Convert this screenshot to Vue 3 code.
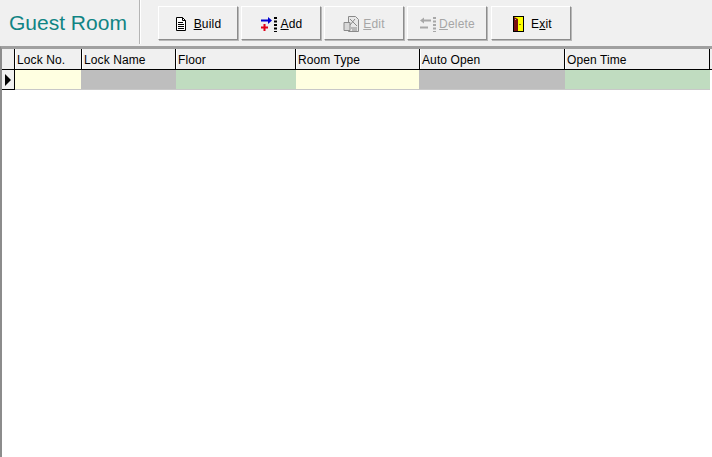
<script setup>
const buttons = [
  { key: 'build', before: '', ul: 'B', after: 'uild', disabled: false },
  { key: 'add', before: '', ul: 'A', after: 'dd', disabled: false },
  { key: 'edit', before: '', ul: 'E', after: 'dit', disabled: true },
  { key: 'delete', before: '', ul: 'D', after: 'elete', disabled: true },
  { key: 'exit', before: 'E', ul: 'x', after: 'it', disabled: false },
]

const columns = [
  { name: 'Lock No.', width: 67, cellWidth: 66, color: '#ffffe1' },
  { name: 'Lock Name', width: 94, cellWidth: 95, color: '#bebebe' },
  { name: 'Floor', width: 120, cellWidth: 120, color: '#c0dcc0' },
  { name: 'Room Type', width: 124, cellWidth: 123, color: '#ffffe1' },
  { name: 'Auto Open', width: 145, cellWidth: 146, color: '#bebebe' },
  { name: 'Open Time', width: 145, cellWidth: 145, color: '#c0dcc0' },
]
</script>

<template>
  <div class="page">
    <div class="toolbar">
      <div class="title">Guest Room</div>
      <div class="divider"></div>
      <div class="buttons">
        <button
          v-for="b in buttons"
          :key="b.key"
          class="btn"
          :class="[b.key, { off: b.disabled }]"
          type="button"
        >
          <svg v-if="b.key === 'build'" width="12" height="14" viewBox="0 0 12 14">
            <path d="M1.500 .5h6l3 3v10h-9z" fill="#fff" stroke="#000" />
            <path d="M7.500 .5v3h3M3 5.500h5M3 7.500h6M3 9.500h6M3 11.500h6" fill="none" stroke="#000" />
          </svg>
          <svg v-else-if="b.key === 'add'" width="18" height="17" viewBox="0 0 18 17">
            <path d="M1 4.500h8" stroke="#0000d0" stroke-width="2" />
            <path d="M8 1l4 3.500-4 3.500z" fill="#0000d0" />
            <path d="M1 11.500h7M4.500 8v7" stroke="#e00018" stroke-width="2" />
            <path d="M15.500 1v15" stroke="#000" stroke-width="3" stroke-dasharray="2 1.500" />
          </svg>
          <svg v-else-if="b.key === 'edit'" width="18" height="18" viewBox="0 0 18 18">
            <path d="M5.500 1.500h7l3 3v12h-10z" fill="#e8e8e8" stroke="#8a8a8a" />
            <path d="M1 7.500h6v8h-6z" fill="#d8d8d8" stroke="#8a8a8a" />
            <path d="M7 4l7 7M12 4l-5 6M8 13h6M9 15h5" stroke="#8a8a8a" fill="none" />
          </svg>
          <svg v-else-if="b.key === 'delete'" width="18" height="17" viewBox="0 0 18 17">
            <path d="M4 4.500h8M1 11.500h8" stroke="#a8a8a8" stroke-width="2" />
            <path d="M5 1.500l-4 3 4 3z" fill="#a8a8a8" />
            <path d="M15.500 1v15" stroke="#a8a8a8" stroke-width="3" stroke-dasharray="2 1.500" />
          </svg>
          <svg v-else width="11" height="16" viewBox="0 0 11 16">
            <path d="M0 0h11v16h-11z" fill="#000" />
            <path d="M1 1h9v14h-9z" fill="#ffff00" />
            <path d="M1 1l4 2v12h-4z" fill="#7a1010" />
            <path d="M2 3h1v1h-1z" fill="#9ab" />
            <path d="M6.500 8h1v1h-1z" fill="#000" />
          </svg>
          <span class="label">{{ b.before }}<u>{{ b.ul }}</u>{{ b.after }}</span>
        </button>
      </div>
    </div>

    <div class="grid">
      <div class="row head">
        <div class="indicator"></div>
        <div
          v-for="c in columns"
          :key="c.name"
          class="hcell"
          :style="{ width: c.width + 'px' }"
        >{{ c.name }}</div>
      </div>
      <div class="row data">
        <div class="indicator current"><span class="arrow"></span></div>
        <div
          v-for="c in columns"
          :key="c.name"
          class="dcell"
          :style="{ width: c.cellWidth + 'px', background: c.color }"
        ></div>
      </div>
    </div>
  </div>
</template>

<style>
html,
body {
  margin: 0;
  background: #fff;
  overflow: hidden;
}
</style>

<style scoped>
.page {
  width: 712px;
  height: 457px;
  font-family: "Liberation Sans", Arial, sans-serif;
  font-size: 12px;
  color: #000;
  display: flex;
  flex-direction: column;
  overflow: hidden;
}

.toolbar {
  height: 46px;
  flex: none;
  background: #f0f0f0;
  display: flex;
  align-items: flex-start;
}

.title {
  width: 139px;
  box-sizing: border-box;
  padding: 9px 0 0 9px;
  font-size: 21px;
  line-height: 27px;
  color: #108484;
}

.divider {
  width: 1px;
  height: 44px;
  margin-right: 17px;
  background: #b4b4b4;
  border-right: 1px solid #fff;
}

.buttons {
  display: flex;
  gap: 3px;
  padding-top: 6px;
}

.btn {
  width: 80px;
  height: 34px;
  box-sizing: border-box;
  padding: 2px 0 0;
  border: 1px solid;
  border-color: #fff #8c8c8c #8c8c8c #fff;
  box-shadow: 1px 1px 0 #b8b8b8;
  background: #f0f0f0;
  font: inherit;
  letter-spacing: 0.2px;
  color: #000;
  display: flex;
  align-items: center;
  justify-content: center;
  gap: 7px;
}

.btn.add {
  gap: 3px;
}

.btn.edit,
.btn.delete {
  gap: 2px;
}

.btn.exit {
  margin-left: 1px;
  padding-left: 3px;
}

.btn.off {
  color: #a6a6a6;
}

.grid {
  flex: 1;
  border-top: 3px solid #a0a0a0;
  border-left: 2px solid #8c8c8c;
  background: #fff;
}

.row {
  display: flex;
}

.head {
  height: 21px;
  box-sizing: border-box;
  background: #f0f0f0;
  border-bottom: 1px solid #000;
}

.indicator {
  width: 13px;
  flex: none;
  box-sizing: border-box;
  background: #f0f0f0;
  border-right: 1px solid #000;
}

.hcell {
  flex: none;
  box-sizing: border-box;
  padding: 1px 0 0 1px;
  line-height: 20px;
  letter-spacing: 0.1px;
  border-left: 1px solid #fff;
  border-right: 1px solid #000;
  white-space: nowrap;
  overflow: hidden;
}

.data {
  height: 20px;
}

.current {
  display: flex;
  align-items: center;
  justify-content: center;
  border-bottom: 1px solid #000;
}

.arrow {
  width: 0;
  height: 0;
  border-top: 6px solid transparent;
  border-bottom: 6px solid transparent;
  border-left: 6px solid #000;
}

.dcell {
  flex: none;
  box-sizing: border-box;
  border-bottom: 1px solid #c8c8c8;
}
</style>
